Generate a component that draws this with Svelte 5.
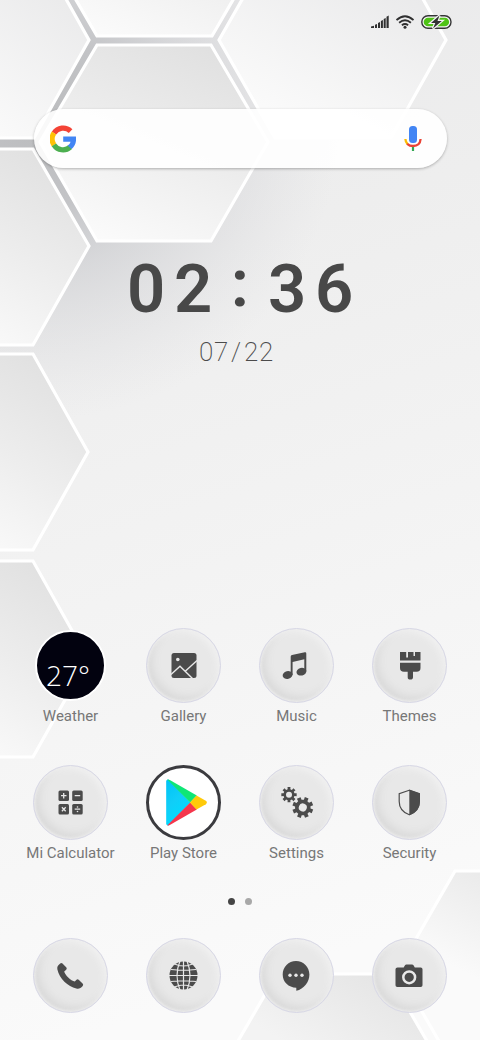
<script>
  const apps = [
    { id: 'weather', label: 'Weather' },
    { id: 'gallery', label: 'Gallery' },
    { id: 'music', label: 'Music' },
    { id: 'themes', label: 'Themes' },
    { id: 'calculator', label: 'Mi Calculator' },
    { id: 'play', label: 'Play Store' },
    { id: 'settings', label: 'Settings' },
    { id: 'security', label: 'Security' }
  ];
  const dock = [
    { id: 'phone', label: 'Phone' },
    { id: 'browser', label: 'Browser' },
    { id: 'messages', label: 'Messages' },
    { id: 'camera', label: 'Camera' }
  ];

  // Outline of an eight-toothed gear with a round hole.
  function gear(cx, cy, outer, inner, hole) {
    const pts = [];
    for (let i = 0; i < 8; i++) {
      const a = (i * Math.PI) / 4;
      for (const [r, d] of [[inner, -0.24], [outer, -0.19], [outer, 0.19], [inner, 0.24]]) {
        pts.push(`${(cx + r * Math.cos(a + d)).toFixed(2)} ${(cy + r * Math.sin(a + d)).toFixed(2)}`);
      }
    }
    return `M${pts.join('L')}Z M${cx - hole} ${cy}a${hole} ${hole} 0 1 0 ${2 * hole} 0a${hole} ${hole} 0 1 0 ${-2 * hole} 0Z`;
  }
</script>

{#snippet glyph(id)}
  <svg class="glyph" viewBox="0 0 75 75" aria-hidden="true">
    {#if id === 'gallery'}
      <rect x="25.5" y="25" width="25" height="25" rx="2.5" />
      <circle cx="31.8" cy="31.5" r="1.8" class="cut" />
      <path d="M25 46.5 34 38.3 46.5 50.5M39.5 43 51 32.5" class="line" stroke-width="1.4" />
    {:else if id === 'music'}
      <path d="M31.7 28.5Q31.8 27.2 33 26.9L45.8 24.3Q47.3 24 47.3 25.5V43.5H45.3V31.2L33.6 34V47H31.7Z" />
      <ellipse cx="28.6" cy="47" rx="5" ry="3.8" transform="rotate(-14 28.6 47)" />
      <ellipse cx="42.4" cy="43.7" rx="5" ry="3.8" transform="rotate(-14 42.4 43.7)" />
    {:else if id === 'themes'}
      <path d="M28 24H34.2V29.5H36V24H41.5V28H43V24H48.5V32.5H28Z" />
      <path d="M28 34.8H48.5V40Q48.5 43.8 44.5 43.8H41V49.2Q41 51.5 38.3 51.5T35.7 49.2V43.8H32Q28 43.8 28 40Z" />
    {:else if id === 'calculator'}
      <rect x="25.5" y="25.5" width="10.5" height="10.5" rx="1.5" />
      <rect x="39.2" y="25.5" width="10.5" height="10.5" rx="1.5" />
      <rect x="25.5" y="39" width="10.5" height="10.5" rx="1.5" />
      <rect x="39.2" y="39" width="10.5" height="10.5" rx="1.5" />
      <path d="M28 30.7H33.5M30.7 28V33.5M41.7 30.7H47.2M28.9 42.3 32.7 46.2M32.7 42.3 28.9 46.2M41.7 44.2H47.2" class="line" stroke-width="1.3" />
      <circle cx="44.5" cy="42" r=".8" class="cut" /><circle cx="44.5" cy="46.5" r=".8" class="cut" />
    {:else if id === 'play'}
      <defs>
        <linearGradient id="play-blue" x1="0" y1="0" x2="0.5" y2="1">
          <stop offset="0" stop-color="#00c3f5" /><stop offset="0.5" stop-color="#10cef8" /><stop offset="1" stop-color="#00dcff" />
        </linearGradient>
      </defs>
      <path d="M20.2 16.5Q20.2 14.3 22.5 14.6L44.5 37.5 22.5 60.4Q20.2 60.8 20.2 58.5Z" fill="url(#play-blue)" />
      <path d="M21.2 14.6Q22.3 14.2 23.8 15L50.8 30.6 44.2 37.5Z" fill="#0fe676" />
      <path d="M21.2 60.5Q22.3 60.8 23.8 60L50.8 44.4 44.2 37.5Z" fill="#f5364c" />
      <path d="M50.5 30.4 59.8 35.8Q62 37.4 59.8 39.2L50.5 44.6 44 37.5Z" fill="#ffca0a" />
    {:else if id === 'settings'}
      <path fill-rule="evenodd" d={gear(30, 29.7, 7.8, 5.6, 3)} />
      <path fill-rule="evenodd" d={gear(43.8, 42.5, 10.6, 7.8, 4)} transform="rotate(22 43.8 42.5)" />
    {:else if id === 'security'}
      <path d="M37.3 25.2 27.2 28.6V36.5C27.2 43 31 47.5 37.3 49.8 43.6 47.5 47.4 43 47.4 36.5V28.6Z" fill="none" stroke="#4b4b4b" stroke-width="1.2" />
      <path d="M37.3 24.8 47.9 28.4V36.5C47.9 43 44 47.8 37.3 50.3Z" />
    {:else if id === 'phone'}
      <path d="M27.2 25.5Q28.4 24.6 29.5 25.6L33.4 29.5Q34.2 30.6 33.2 31.7L31.2 33.6C31.7 36.8 38 43 41.8 43.6L43.5 41.8Q44.6 40.9 45.7 41.8L49.8 45.7Q50.6 46.8 49.7 48C47.6 50.5 45.8 51 43.3 50.5 35 48.8 26.2 40.3 24.4 31.5 23.9 29 24.7 27.4 27.2 25.5Z" />
    {:else if id === 'browser'}
      <circle cx="37.5" cy="37.5" r="14" />
      <path d="M37.5 23V52M23 37.5H52M25 31.5Q37.5 33 50 31.5M25 43.5Q37.5 42 50 43.5M34 23Q28 37.5 34 52M41 23Q47 37.5 41 52M28.5 26Q37.5 30 46.5 26M28.5 49Q37.5 45 46.5 49" class="line" stroke-width="1.2" />
    {:else if id === 'messages'}
      <path d="M37 23C29.5 23 23.7 29 23.7 36.5S29.5 49.5 37.3 49.7V52.8C45 51 50.4 44 50.4 36.5S44.5 23 37 23Z" />
      <circle cx="31" cy="37.2" r="1.7" class="cut" /><circle cx="37" cy="37.2" r="1.7" class="cut" /><circle cx="43" cy="37.2" r="1.7" class="cut" />
    {:else if id === 'camera'}
      <path d="M25.5 29.5H31.7L33 27.3Q33.4 26.5 34.4 26.5H40Q41 26.5 41.5 27.3L42.8 29.5H48.7Q50.5 29.5 50.5 31.3V47.2Q50.5 49 48.7 49H25.3Q23.5 49 23.5 47.2V31.3Q23.5 29.5 25.5 29.5Z" />
      <circle cx="37.2" cy="39.3" r="5.9" fill="none" stroke="#e9e9e9" stroke-width="2.5" />
    {/if}
  </svg>
{/snippet}

{#snippet icon(id)}
  {#if id === 'weather'}
    <span class="disc weather"><span>27°</span></span>
  {:else}
    <span class="disc" class:store={id === 'play'}>{@render glyph(id)}</span>
  {/if}
{/snippet}

<div class="phone">
  <svg class="wallpaper" viewBox="0 0 480 1040" preserveAspectRatio="xMidYMid slice" aria-hidden="true">
    <defs>
      <linearGradient id="base" x1="0" y1="0" x2="0.15" y2="1">
        <stop offset="0" stop-color="#e9e9ea" /><stop offset="0.3" stop-color="#eeeeee" />
        <stop offset="0.6" stop-color="#f3f3f3" /><stop offset="1" stop-color="#fafafa" />
      </linearGradient>
      <radialGradient id="shade" gradientUnits="userSpaceOnUse" cx="40" cy="120" r="300">
        <stop offset="0" stop-color="#bbbcbe" /><stop offset="0.28" stop-color="#bebfc2" stop-opacity="0.9" />
        <stop offset="0.5" stop-color="#c6c7cb" stop-opacity="0.55" /><stop offset="1" stop-color="#d8d8dc" stop-opacity="0" />
      </radialGradient>
      <linearGradient id="tile" x1="0.75" y1="0" x2="0.25" y2="1">
        <stop offset="0" stop-color="#e0e0e0" /><stop offset="0.5" stop-color="#ededed" /><stop offset="1" stop-color="#fbfbfb" />
      </linearGradient>
      <linearGradient id="flare" x1="0.85" y1="0" x2="0.3" y2="0.9">
        <stop offset="0" stop-color="#e6e6e7" /><stop offset="1" stop-color="#fafafa" />
      </linearGradient>
      <linearGradient id="corner" gradientUnits="userSpaceOnUse" x1="490" y1="860" x2="440" y2="960">
        <stop offset="0" stop-color="#e8e8e8" /><stop offset="1" stop-color="#fafafa" />
      </linearGradient>
      <linearGradient id="foot" gradientUnits="userSpaceOnUse" x1="390" y1="970" x2="330" y2="1070">
        <stop offset="0" stop-color="#e4e4e4" /><stop offset="1" stop-color="#f3f3f3" />
      </linearGradient>
    </defs>
    <rect width="480" height="1040" fill="url(#base)" />
    <rect width="480" height="480" fill="url(#shade)" />
    <g stroke="#fff" stroke-width="3.2" fill="url(#tile)">
      <path d="M-80 40-24-58H34L89 40 34 138H-24Z" fill="url(#flare)" />
      <path d="M97 36 40-62 97-160H212L269-62 212 36Z" />
      <path d="M97 45H211L268 142 211 241H97L40 142Z" />
      <path d="M219 40 275-58H391L446 40 391 138H275Z" fill="url(#flare)" />
      <path d="M-80 247-24 149H33L89 246 33 345H-24Z" />
      <path d="M-80 452-24 354H33L88 452 33 550H-24Z" />
      <path d="M-80 659-24 561H33L88 659 33 757H-24Z" />
      <path d="M398 970 455 871H570L627 970 570 1069H455Z" fill="url(#corner)" />
      <path d="M220 1072 277 974H388L445 1072 388 1170H277Z" fill="url(#foot)" />
    </g>
  </svg>

  <header class="status">
    <svg width="18" height="14" viewBox="0 0 18 14" role="img" aria-label="Mobile signal">
      <path d="M0 13V11.5L3 10.8V13ZM4 13V9.8L6 9V13ZM7 13V8L9 7V13ZM9.9 13V6L11.9 5V13ZM12.7 13V4L14.7 3V13ZM15.5 13V1.7L17.7.5V13Z" fill="#303030" />
    </svg>
    <svg width="18" height="14" viewBox="1 0 18 14" role="img" aria-label="Wi-Fi">
      <path d="M1.5 5Q10-2.6 18.5 5M4.1 7.7Q10 2.8 15.9 7.7M6.9 10.3Q10 7.8 13.1 10.3" fill="none" stroke="#303030" stroke-width="1.8" />
      <circle cx="10" cy="12.2" r="1.5" fill="#303030" />
    </svg>
    <svg width="31" height="14" viewBox="0 0 31 14" role="img" aria-label="Battery charging">
      <rect x=".8" y=".8" width="29.2" height="12.4" rx="6.2" fill="#f4f4f4" stroke="#353535" stroke-width="1.4" />
      <rect x="2.7" y="2.7" width="25.4" height="8.6" rx="4.3" fill="#4fc316" />
      <path d="M18.5.5 10 7.9H14.3L12 13.5 20.8 5.9H16.5Z" fill="#333" stroke="#f4f4f4" stroke-width="2.4" paint-order="stroke" />
    </svg>
  </header>

  <form class="search" role="search">
    <button type="button" aria-label="Google">
      <svg width="26" height="28" viewBox="0 0 26 28">
        <g fill="none" stroke-width="5.2">
          <path d="M4 8.1A10.8 10.8 0 0 1 20.6 6.1" stroke="#f44336" />
          <path d="M4 20A10.8 10.8 0 0 1 4 8" stroke="#ffc107" />
          <path d="M3.9 19.8A10.8 10.8 0 0 0 20.3 22" stroke="#4caf50" />
        </g>
        <path d="M13.2 11.5H25.9C26.7 16.3 25.2 21.2 21.7 24.1L17.7 20.7C19.2 19.7 20.1 18.4 20.5 16.8H13.2Z" fill="#4285f4" />
      </svg>
    </button>
    <input type="search" aria-label="Search" />
    <button type="button" aria-label="Voice search">
      <svg width="18" height="28" viewBox="0 0 18 28">
        <rect x="5" y="1" width="8" height="17" rx="3.5" fill="#4285f4" />
        <path d="M1.4 14Q1.5 17 3.6 19.2" fill="none" stroke="#fbbc05" stroke-width="2.3" />
        <path d="M16.6 14Q16 21 9 21 5.6 21 3.2 18.8" fill="none" stroke="#ea4335" stroke-width="2.3" />
        <path d="M9 22V26" stroke="#34a853" stroke-width="2.2" />
      </svg>
    </button>
  </form>

  <section class="clock">
    <time class="time"><span>0</span><span>2</span><span class="colon">:</span><span>3</span><span>6</span></time>
    <time class="date"><span>0</span><span>7</span><span>/</span><span>2</span><span>2</span></time>
  </section>

  <main class="grid">
    {#each apps as app}
      <button type="button" class="app">
        {@render icon(app.id)}
        <span class="label">{app.label}</span>
      </button>
    {/each}
  </main>

  <div class="pages"><i class="on"></i><i></i></div>

  <nav class="grid dock">
    {#each dock as app}
      <button type="button" class="app" aria-label={app.label}>{@render icon(app.id)}</button>
    {/each}
  </nav>
</div>

<style>
  :global(body) {
    margin: 0;
  }
  .phone {
    position: relative;
    isolation: isolate;
    display: flex;
    flex-direction: column;
    box-sizing: border-box;
    min-height: 100vh;
    padding-bottom: 27px;
    font-family: Roboto, sans-serif;
    color: #4b4b4b;
    overflow: hidden;
  }
  .wallpaper {
    position: absolute;
    inset: 0;
    z-index: -1;
    width: 100%;
    height: 100%;
  }
  button {
    padding: 0;
    border: 0;
    background: none;
    font: inherit;
    color: inherit;
  }
  svg {
    display: block;
  }
  .status {
    display: flex;
    justify-content: flex-end;
    gap: 7px;
    padding: 15px 28px 0 0;
  }
  .search {
    display: flex;
    align-items: center;
    justify-content: space-between;
    box-sizing: border-box;
    height: 59px;
    margin: 80px 33px 0 34px;
    padding: 0 25px 0 16px;
    border-radius: 30px;
    background: rgba(255, 255, 255, 0.9);
    box-shadow: 0 1px 3px rgba(0, 0, 0, 0.28);
  }
  .search input {
    flex: 1;
    min-width: 0;
    border: 0;
    outline: 0;
    background: none;
    font: 18px Roboto, sans-serif;
  }
  .clock {
    display: flex;
    flex-direction: column;
    align-items: center;
    margin-top: 85px;
  }
  .time {
    display: flex;
    gap: 9px;
    font-size: 67px;
    line-height: 72px;
    font-weight: 600;
    color: #484848;
  }
  .time span {
    width: 38px;
    text-align: center;
  }
  .time .colon {
    line-height: 60px;
  }
  .date {
    display: flex;
    gap: 1px;
    margin: 11px 0 32px;
    padding-right: 8px;
    font-size: 26px;
    line-height: 32px;
    font-weight: 200;
  }
  .date span {
    width: 14px;
    text-align: center;
  }
  .grid {
    display: grid;
    grid-template-columns: repeat(4, 1fr);
    row-gap: 38px;
    margin: auto 14px 0;
  }
  .app {
    display: flex;
    flex-direction: column;
    align-items: center;
    gap: 2px;
  }
  .disc {
    display: block;
    box-sizing: border-box;
    width: 75px;
    height: 75px;
    border: 1px solid #d8d8e6;
    border-radius: 50%;
    background: #e8e8e8;
    box-shadow:
      inset -3px 3px 6px #f0f0f0,
      inset 1px -1px 3px #ececec,
      inset 5px -5px 9px #d9d9d9;
  }
  .glyph {
    width: 75px;
    height: 75px;
    margin: -1px;
    fill: #4b4b4b;
  }
  .cut {
    fill: #e8e8e8;
  }
  .line {
    fill: none;
    stroke: #e8e8e8;
  }
  .store {
    border: 3px solid #3b3b3f;
    background: #fff;
    box-shadow: none;
  }
  .store .glyph {
    margin: -3px;
  }
  .weather {
    width: 71px;
    height: 71px;
    margin: 2px;
    padding: 25px 0 0 9px;
    border: 2px solid #fff;
    background: #02020f;
    box-shadow: none;
    color: #fff;
    font: 400 28px/36px "Open Sans", sans-serif;
    font-weight: 300;
    text-align: left;
  }
  .label {
    font-size: 15px;
    line-height: 22px;
    color: #777;
    white-space: nowrap;
  }
  .pages {
    display: flex;
    justify-content: center;
    gap: 10px;
    margin-top: 34px;
  }
  .pages i {
    width: 7px;
    height: 7px;
    border-radius: 50%;
    background: #a8a8a8;
  }
  .pages .on {
    background: #454545;
  }
  .dock {
    margin-top: 33px;
  }
</style>
